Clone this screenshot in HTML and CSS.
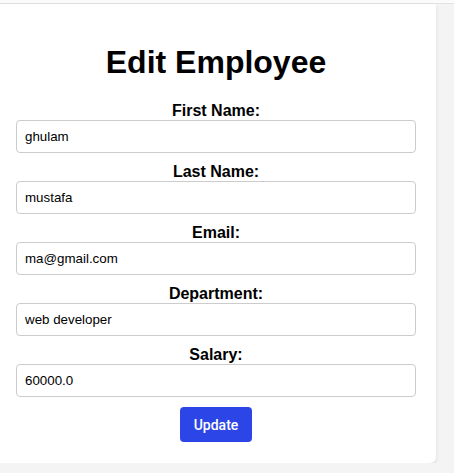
FILE: index.html
```html
<!DOCTYPE html>
<html>
<head>
<meta charset="utf-8">
<link rel="stylesheet" href="styles.css">
</head>
<body>
<div class="topbar"></div>
<div class="card">
  <h1 class="title">Edit Employee</h1>
  <form class="form">
    <label class="label">First Name:</label>
    <input class="field" type="text" value="ghulam">
    <label class="label">Last Name:</label>
    <input class="field" type="text" value="mustafa">
    <label class="label">Email:</label>
    <input class="field" type="text" value="ma@gmail.com">
    <label class="label">Department:</label>
    <input class="field" type="text" value="web developer">
    <label class="label">Salary:</label>
    <input class="field" type="text" value="60000.0">
    <button class="btn" type="button">Update</button>
  </form>
</div>
</body>
</html>
```
FILE: styles.css
```css
html, body {
  margin: 0;
  padding: 0;
}
body {
  background: #f4f4f4;
  font-family: "Liberation Sans", Arial, sans-serif;
  color: #000;
}
.topbar {
  height: 3px;
  background: #fbfbfb;
  border-bottom: 1px solid #e2e2e2;
}
.card {
  width: 400px;
  margin: 0 0 0 -4px;
  padding: 20px 20px 21px;
  background: #fff;
  border-radius: 0 0 6px 6px;
  box-shadow: 0 2px 4px rgba(0,0,0,0.1);
}
.title {
  font-size: 32px;
  font-weight: bold;
  text-align: center;
  margin: 20px 0 21px;
  line-height: 37px;
}
.form {
  display: flex;
  flex-direction: column;
  align-items: stretch;
}
.label {
  display: block;
  font-size: 16px;
  font-weight: bold;
  text-align: center;
  line-height: 18px;
}
.field {
  box-sizing: border-box;
  width: 400px;
  height: 33px;
  margin: 0 0 10px;
  padding: 8px;
  border: 1px solid #cccccc;
  border-radius: 4px;
  font-family: "Liberation Sans", Arial, sans-serif;
  font-size: 13.33px;
  color: #000;
  background: #fff;
}
.btn {
  align-self: center;
  width: 72px;
  height: 35px;
  border: none;
  border-radius: 4px;
  background: #2c45e6;
  color: #fff;
  font-family: Roboto, "Liberation Sans", sans-serif;
  font-size: 14px;
  font-weight: 500;
  padding: 0;
  cursor: pointer;
}
```
